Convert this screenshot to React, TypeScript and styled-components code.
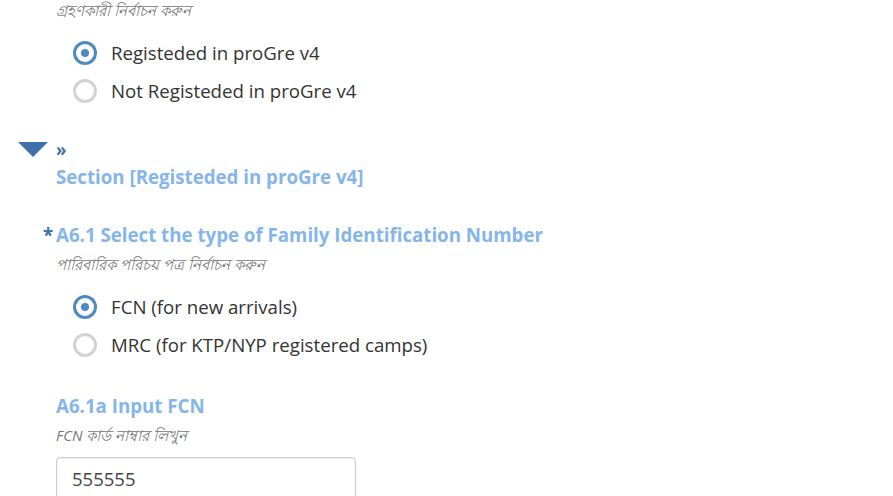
import React from "react";
import styled, { createGlobalStyle } from "styled-components";

const Global = createGlobalStyle`
  html, body { margin: 0; padding: 0; background: #fff; }
  body { font-family: "Open Sans", "Noto Sans", sans-serif; color: #333; overflow: hidden; }
`;

const Page = styled.div`
  width: 893px;
  height: 496px;
  overflow: hidden;
  padding-left: 56px;
  box-sizing: border-box;
`;

const Hint = styled.div<{ $top?: number }>`
  font-size: 15px;
  font-style: italic;
  color: #777;
  line-height: 21px;
  margin-top: ${(p) => p.$top ?? 0}px;
  font-family: "Open Sans", "Noto Sans", sans-serif;
`;

const RadioList = styled.div<{ $top: number }>`
  display: flex;
  flex-direction: column;
  gap: 14px;
  margin-top: ${(p) => p.$top}px;
  padding-left: 17px;
`;

const Option = styled.label`
  display: flex;
  align-items: center;
  gap: 14px;
  font-size: 18.67px;
  line-height: 24px;
  color: #333;
`;

const Radio = styled.span<{ $checked?: boolean }>`
  width: 24px;
  height: 24px;
  box-sizing: border-box;
  border-radius: 50%;
  border: 3px solid ${(p) => (p.$checked ? "#4f89c3" : "#d3d3d3")};
  display: flex;
  align-items: center;
  justify-content: center;
  &::after {
    content: "";
    width: 8px;
    height: 8px;
    border-radius: 50%;
    background: ${(p) => (p.$checked ? "#4f89c3" : "transparent")};
  }
`;

const SectionHeader = styled.div`
  position: relative;
  margin-top: 38px;
`;

const Caret = styled.span`
  position: absolute;
  left: -38px;
  top: 1px;
  width: 0;
  height: 0;
  border-left: 15px solid transparent;
  border-right: 15px solid transparent;
  border-top: 15px solid #3e71a7;
`;

const Chevrons = styled.div`
  font-size: 17px;
  font-weight: 700;
  color: #3e71a7;
  line-height: 18px;
`;

const SectionTitle = styled.div`
  font-size: 18.7px;
  font-weight: 700;
  color: #85b5ea;
  line-height: 24px;
  margin-top: 6px;
`;

const QuestionTitle = styled.div<{ $top: number }>`
  position: relative;
  font-size: 18.7px;
  font-weight: 700;
  color: #85b5ea;
  line-height: 24px;
  margin-top: ${(p) => p.$top}px;
`;

const Required = styled.span`
  position: absolute;
  left: -13px;
  top: 0;
  color: #3e71a7;
  font-weight: 700;
`;

const Input = styled.div`
  margin-top: 11px;
  width: 300px;
  height: 44px;
  box-sizing: border-box;
  border: 1px solid #ccc;
  border-radius: 4px;
  box-shadow: inset 0 1px 2px rgba(0, 0, 0, 0.08);
  padding: 8px 15px;
  font-size: 18.5px;
  line-height: 26px;
  color: #444;
`;

export default function App() {
  return (
    <>
      <Global />
      <Page>
        <Hint $top={0}>গ্রহণকারী নির্বাচন করুন</Hint>
        <RadioList $top={20}>
          <Option>
            <Radio $checked />
            Registeded in proGre v4
          </Option>
          <Option>
            <Radio />
            Not Registeded in proGre v4
          </Option>
        </RadioList>
        <SectionHeader>
          <Caret />
          <Chevrons>»</Chevrons>
          <SectionTitle>Section [Registeded in proGre v4]</SectionTitle>
        </SectionHeader>
        <QuestionTitle $top={34}>
          <Required>*</Required>A6.1 Select the type of Family Identification Number
        </QuestionTitle>
        <Hint $top={7}>পারিবারিক পরিচয় পত্র নির্বাচন করুন</Hint>
        <RadioList $top={20}>
          <Option>
            <Radio $checked />
            FCN (for new arrivals)
          </Option>
          <Option>
            <Radio />
            MRC (for KTP/NYP registered camps)
          </Option>
        </RadioList>
        <QuestionTitle $top={37}>A6.1a Input FCN</QuestionTitle>
        <Hint $top={7}>FCN কার্ড নাম্বার লিখুন</Hint>
        <Input>555555</Input>
      </Page>
    </>
  );
}
